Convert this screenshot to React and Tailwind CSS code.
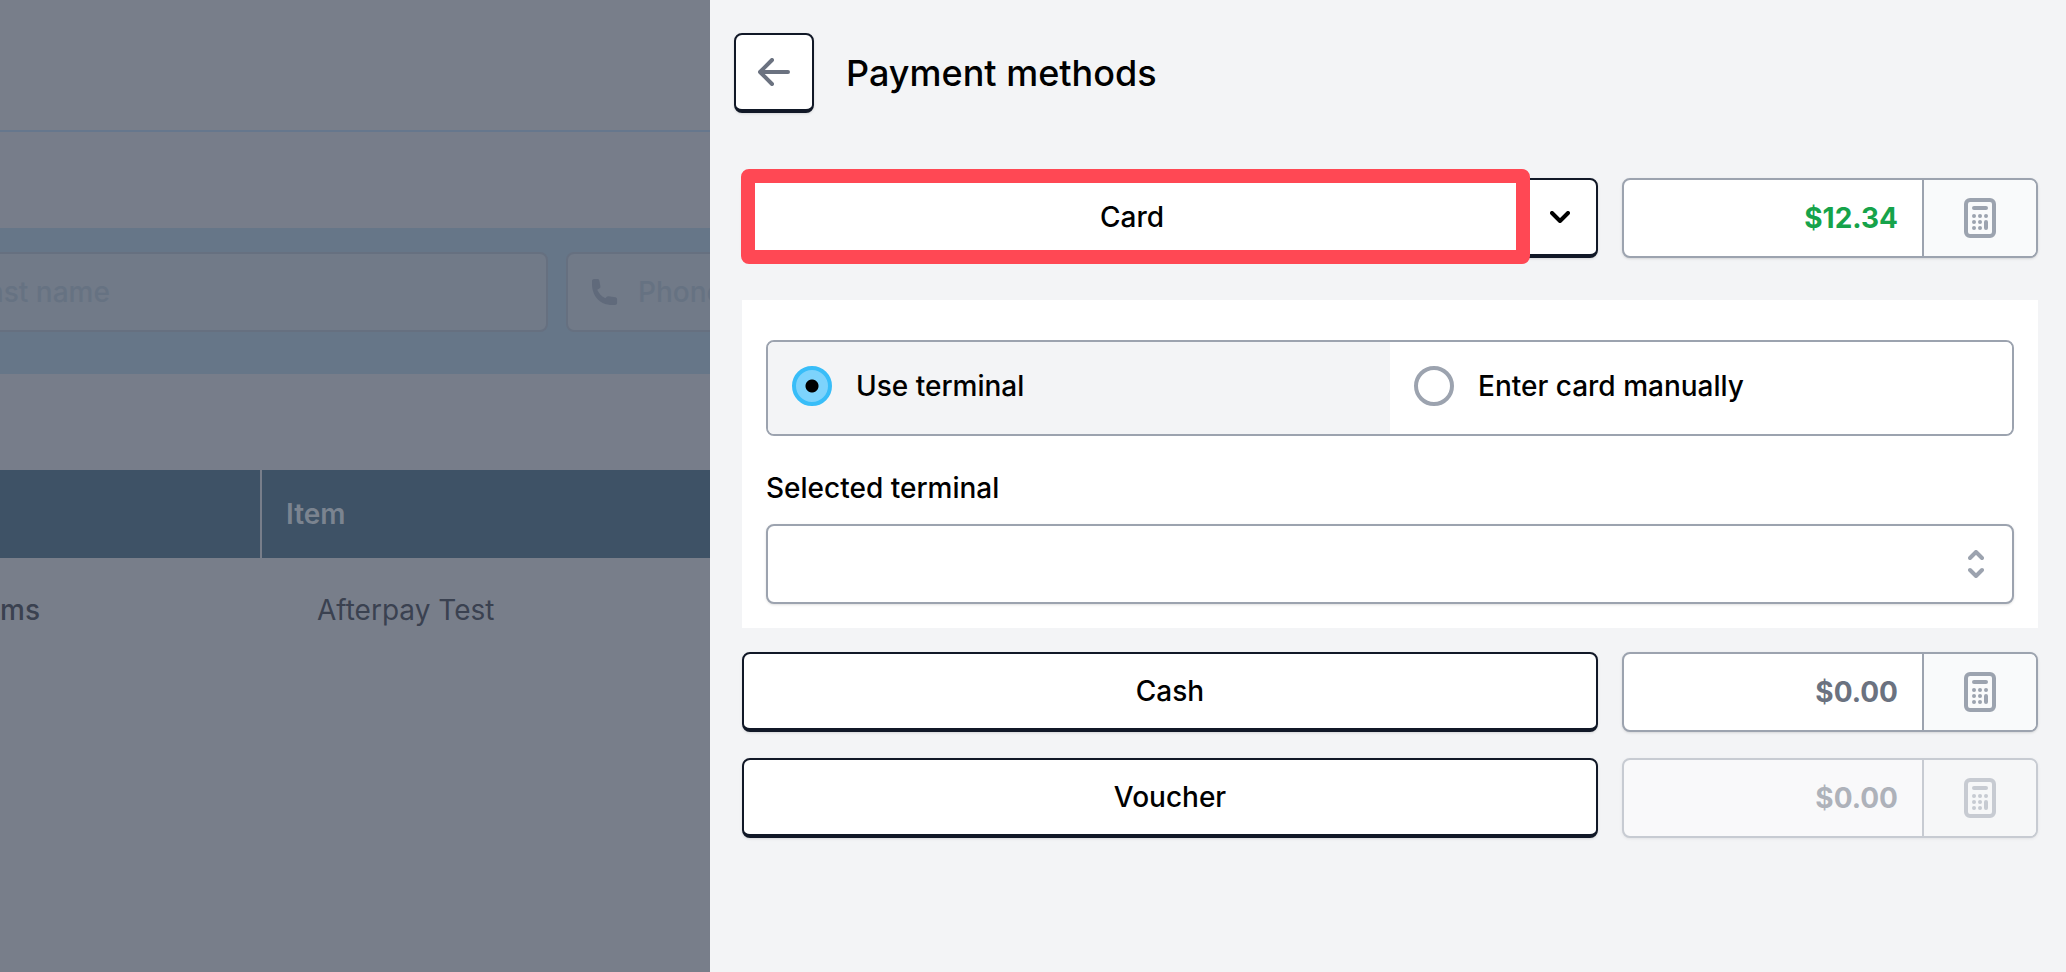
import { useState } from "react";

function CalculatorIcon() {
  return (
    <svg viewBox="0 0 32 40" className="h-10 w-8" fill="none" aria-hidden="true">
      <rect x="2" y="2" width="28" height="36" rx="4" stroke="currentColor" strokeWidth="4" />
      <g stroke="currentColor" strokeWidth="4" strokeLinecap="round">
        <path d="M10 10h12M10 18h.01M16 18h.01M22 18h.01M10 24h.01M16 24h.01M10 30h.01M16 30h.01M22 24v6" />
      </g>
    </svg>
  );
}

function Field({ label, icon, className }) {
  return (
    <label
      className={`flex h-20 shrink-0 items-center gap-5 rounded-lg border-2 border-[#667080] bg-[#717a88] px-6 ${className}`}
    >
      {icon}
      <input
        type="text"
        aria-label={label}
        placeholder={label}
        className="w-full min-w-0 bg-transparent text-[28px] leading-10 font-medium outline-none placeholder:text-[#667282]"
      />
    </label>
  );
}

function PhoneIcon() {
  return (
    <svg viewBox="0 0 26 26" className="size-[26px] shrink-0 text-[#606a7b]" fill="currentColor" aria-hidden="true">
      <path d="M0 2C0 .9.9 0 2 0h3.400c1 0 1.800.7 2 1.700l1 5.800c.1.900-.3 1.700-1.100 2.100l-2.100 1.100c1.500 3.600 4.500 6.900 8.200 8.600l1.100-1.300c.4-.6 1.200-.9 2.100-.8l6.800 1c1 .2 1.700 1 1.700 2V24c0 1.100-.9 2-2 2h-3C8.500 26 0 17.500 0 5z" />
    </svg>
  );
}

function OrderPage() {
  return (
    <main className="flex w-[710px] shrink-0 flex-col overflow-hidden bg-[#787e8a]">
      <header className="h-[132px] border-b-2 border-[#66778d]" />
      <div className="h-24 bg-[#777d8a]" />
      <section className="flex h-[146px] items-start justify-end gap-[18px] overflow-hidden bg-[#667688] pt-6">
        <Field label="Last name" className="w-[602px]" />
        <Field label="Phone" icon={<PhoneIcon />} className="-mr-[200px] w-[344px]" />
      </section>
      <div className="h-24 bg-[#777d8a]" />
      <table className="-ml-[200px] w-[910px] table-fixed text-left text-[28px] leading-10">
        <thead>
          <tr className="h-[88px] bg-[#3e5266] text-[#7b8490]">
            <th className="w-[461px] border-r-2 border-[#787e8a]" aria-label="Category" />
            <th className="pl-6 font-semibold">Item</th>
          </tr>
        </thead>
        <tbody>
          <tr className="h-[104px] text-[#3a4150]">
            <td className="pr-[221px] text-right font-medium">Items</td>
            <td className="pl-14">Afterpay Test</td>
          </tr>
        </tbody>
      </table>
    </main>
  );
}

const outlined = "border-2 border-b-4 border-[#111827] bg-white shadow-sm";

function Amount({ label, value, tone, disabled }) {
  return (
    <div
      className={`flex h-20 w-[416px] shrink-0 overflow-hidden rounded-lg border-2 border-[#9ca3af] bg-white shadow ${disabled ? "opacity-50" : ""}`}
    >
      <input
        type="text"
        aria-label={`${label} amount`}
        defaultValue={value}
        disabled={disabled}
        className={`min-w-0 flex-1 px-6 text-right text-[28px] font-bold outline-none ${tone}`}
      />
      <button
        type="button"
        aria-label={`${label} calculator`}
        disabled={disabled}
        className="flex w-[114px] items-center justify-center border-l-2 border-[#9ca3af] bg-[#f9fafb] text-[#9ca3af]"
      >
        <CalculatorIcon />
      </button>
    </div>
  );
}

function MethodRow({ label, value, tone, disabled }) {
  return (
    <div className="flex gap-6">
      <button type="button" className={`h-20 flex-1 rounded-lg text-[28px] leading-10 font-medium ${outlined}`}>
        {label}
      </button>
      <Amount label={label} value={value} tone={tone} disabled={disabled} />
    </div>
  );
}

function RadioOption({ label, checked, onChange }) {
  return (
    <label className={`flex flex-1 items-center gap-6 px-6 pb-1 ${checked ? "bg-[#f3f4f6]" : "bg-white"}`}>
      <input
        type="radio"
        name="card-entry"
        checked={checked}
        onChange={onChange}
        className="size-10 appearance-none rounded-full border-4 border-[#9ca3af] bg-white checked:border-[#38bdf8] checked:bg-[#7dd3fc] checked:bg-[radial-gradient(circle,#000_6px,transparent_7px)]"
      />
      <span className="text-[28px] leading-10 font-medium">{label}</span>
    </label>
  );
}

export default function App() {
  const [entry, setEntry] = useState("terminal");
  return (
    <div className="flex min-h-screen font-['Inter',sans-serif] text-black">
      <OrderPage />
      <aside className="min-w-0 flex-1 bg-[#f3f4f6] pt-[33px] pr-7 pl-6">
        <header className="flex items-center gap-8">
          <button
            type="button"
            aria-label="Back"
            className={`flex size-20 items-center justify-center rounded-lg text-[#6b7280] ${outlined}`}
          >
            <svg viewBox="0 0 32 28" className="h-7 w-8" fill="none" aria-hidden="true">
              <path d="M14 2 2 14l12 12M2 14h28" stroke="currentColor" strokeWidth="4" strokeLinecap="round" strokeLinejoin="round" />
            </svg>
          </button>
          <h1 className="text-[36px] leading-10 font-medium">Payment methods</h1>
        </header>

        <div className="mt-[65px] ml-2">
          <div className="flex gap-6">
            <div className="relative flex h-20 flex-1">
              <button type="button" className={`flex-1 rounded-l-lg text-[28px] leading-10 font-medium ${outlined}`}>
                Card
              </button>
              <button
                type="button"
                aria-label="More card options"
                className={`flex w-[76px] items-center justify-center rounded-r-lg ${outlined}`}
              >
                <svg viewBox="0 0 20 12" className="h-3 w-5" fill="none" aria-hidden="true">
                  <path d="m2 2 8 8 8-8" stroke="currentColor" strokeWidth="4" strokeLinecap="round" strokeLinejoin="round" />
                </svg>
              </button>
              <div className="pointer-events-none absolute -top-[9px] right-[68px] -bottom-[6px] -left-px rounded-lg border-[14px] border-[#ff4854]" />
            </div>
            <Amount label="Card" value="$12.34" tone="text-[#16a34a]" />
          </div>

          <section className="mt-[42px] bg-white px-6 pt-10 pb-6">
            <div role="radiogroup" aria-label="Card entry" className="flex h-24 overflow-hidden rounded-lg border-2 border-[#9ca3af]">
              <RadioOption label="Use terminal" checked={entry === "terminal"} onChange={() => setEntry("terminal")} />
              <RadioOption label="Enter card manually" checked={entry === "manual"} onChange={() => setEntry("manual")} />
            </div>
            <label htmlFor="terminal" className="mt-8 block text-[28px] leading-10 font-medium">
              Selected terminal
            </label>
            <div className="mt-4 grid items-center">
              <select
                id="terminal"
                className="col-start-1 row-start-1 h-20 w-full appearance-none rounded-lg border-2 border-[#9ca3af] bg-white px-6 text-[28px] shadow-sm"
              >
                <option value=""></option>
              </select>
              <svg viewBox="0 0 16 28" className="pointer-events-none col-start-1 row-start-1 mr-[30px] h-7 w-4 justify-self-end text-[#9ca3af]" fill="none" aria-hidden="true">
                <path d="m2 8 6-6 6 6M2 20l6 6 6-6" stroke="currentColor" strokeWidth="4" strokeLinecap="round" strokeLinejoin="round" />
              </svg>
            </div>
          </section>

          <div className="mt-6 flex flex-col gap-[26px]">
            <MethodRow label="Cash" value="$0.00" tone="text-[#6b7280]" />
            <MethodRow label="Voucher" value="$0.00" tone="text-[#6b7280]" disabled />
          </div>
        </div>
      </aside>
    </div>
  );
}
